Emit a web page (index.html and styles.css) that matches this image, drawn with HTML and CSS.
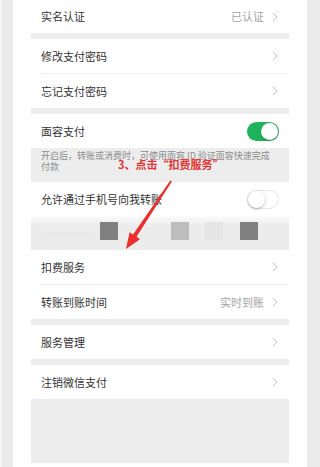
FILE: index.html
```html
<!DOCTYPE html>
<html lang="zh-CN">
<head>
<meta charset="utf-8">
<link rel="stylesheet" href="styles.css">
</head>
<body>
<div class="frame">
  <div class="side side-left"></div>
  <div class="panel">
    <div class="screen">
      <div class="row h33">
        <span class="label">实名认证</span>
        <span class="right"><span class="value">已认证</span><svg class="chev" viewBox="0 0 6 10"><polyline points="1,1 5,5 1,9"/></svg></span>
      </div>
      <div class="sep"></div>
      <div class="row">
        <span class="label">修改支付密码</span>
        <span class="right"><svg class="chev" viewBox="0 0 6 10"><polyline points="1,1 5,5 1,9"/></svg></span>
      </div>
      <div class="divider"></div>
      <div class="row">
        <span class="label">忘记支付密码</span>
        <span class="right"><svg class="chev" viewBox="0 0 6 10"><polyline points="1,1 5,5 1,9"/></svg></span>
      </div>
      <div class="sep"></div>
      <div class="row">
        <span class="label">面容支付</span>
        <span class="toggle on"><span class="knob"></span></span>
      </div>
      <div class="desc">开启后，转账或消费时，可使用面容 ID 验证面容快速完成付款</div>
      <div class="row">
        <span class="label">允许通过手机号向我转账</span>
        <span class="toggle off"><span class="knob"></span></span>
      </div>
      <div class="blur">
        <span class="ghost-text"></span>
        <span class="sq dark sq1"></span>
        <span class="sq light sq2"></span>
        <span class="sq faint sq3"></span>
        <span class="sq dark sq4"></span>
      </div>
      <div class="row">
        <span class="label">扣费服务</span>
        <span class="right"><svg class="chev" viewBox="0 0 6 10"><polyline points="1,1 5,5 1,9"/></svg></span>
      </div>
      <div class="divider"></div>
      <div class="row">
        <span class="label">转账到账时间</span>
        <span class="right"><span class="value">实时到账</span><svg class="chev" viewBox="0 0 6 10"><polyline points="1,1 5,5 1,9"/></svg></span>
      </div>
      <div class="sep"></div>
      <div class="row">
        <span class="label">服务管理</span>
        <span class="right"><svg class="chev" viewBox="0 0 6 10"><polyline points="1,1 5,5 1,9"/></svg></span>
      </div>
      <div class="sep"></div>
      <div class="row">
        <span class="label">注销微信支付</span>
        <span class="right"><svg class="chev" viewBox="0 0 6 10"><polyline points="1,1 5,5 1,9"/></svg></span>
      </div>
      <div class="bottom-fill"></div>
    </div>
  </div>
  <div class="side side-right"></div>

  <div class="note">3、点击“扣费服务”</div>
  <svg class="arrow" viewBox="0 0 320 467" width="320" height="467">
    <polygon points="170.3,180.4 133.1,234.6 129.6,232.2 126,249 140,239.2 136.5,236.8 171.9,181.4"/>
  </svg>
</div>
</body>
</html>
```

FILE: styles.css
```css
* { box-sizing: border-box; }
html, body { margin: 0; padding: 0; }
body {
  font-family: "Noto Sans CJK SC", "Noto Sans", sans-serif;
  background: #ffffff;
}
.frame {
  position: relative;
  width: 320px;
  height: 467px;
  display: flex;
  overflow: hidden;
}
.side {
  width: 13px;
  background: #ebebeb;
}
.side-left { border-left: 2px solid #f5f5f5; }
.side-right { width: 13px; }
.panel {
  width: 294px;
  background: #ffffff;
  padding: 0 18px;
}
.screen {
  display: flex;
  flex-direction: column;
}
.row {
  height: 34px;
  display: flex;
  align-items: center;
  justify-content: space-between;
  padding: 0 10px 0 10px;
  background: #ffffff;
}
.row.h33 { height: 33px; }
.label {
  font-size: 11px;
  color: #333333;
  line-height: 1;
}
.right {
  display: flex;
  align-items: center;
  gap: 8px;
  padding-right: 1px;
}
.value {
  font-size: 11px;
  color: #a3a3a3;
  line-height: 1;
}
.chev {
  width: 6px;
  height: 10px;
  fill: none;
  stroke: #bababa;
  stroke-width: 0.9;
}
.sep {
  height: 6px;
  background: #ededed;
}
.divider {
  height: 1px;
  margin-left: 10px;
  background: #f0f0f0;
}
.toggle {
  width: 32px;
  height: 19px;
  border-radius: 10px;
  display: flex;
  align-items: center;
  padding: 1px;
}
.toggle.on {
  background: #1eb45c;
  justify-content: flex-end;
}
.toggle.off {
  background: #ffffff;
  border: 1px solid #e6e6e6;
  padding: 0;
}
.knob {
  width: 17px;
  height: 17px;
  border-radius: 50%;
  background: #ffffff;
  box-shadow: 0 1px 2px rgba(0,0,0,0.25);
}
.toggle.off .knob { box-shadow: 0 1px 3px rgba(0,0,0,0.3); }
.desc {
  height: 34px;
  background: #ededed;
  color: #8c8c8c;
  font-size: 9px;
  line-height: 11px;
  padding: 2px 16px 0 10px;
}
.blur {
  height: 34px;
  background: linear-gradient(#fbfbfb 0, #f4f4f4 5px, #ececec 9px, #ececec 100%);
  display: flex;
  align-items: flex-start;
  padding-top: 6px;
  position: relative;
}
.ghost-text {
  width: 52px;
  height: 4px;
  margin-top: 10px;
  margin-left: 10px;
  background: #e8e8e8;
  filter: blur(1.5px);
}
.sq {
  width: 18px;
  height: 18px;
  display: block;
}
.sq.dark { background: #808080; }
.sq.light { background: #bdbdbd; }
.sq.faint { background: #e5e5e5; }
.sq1 { margin-left: 7px; }
.sq2 { margin-left: 53px; }
.sq3 { margin-left: 16px; }
.sq4 { margin-left: 17px; }
.bottom-fill {
  height: 64px;
  background: #ededed;
}
.note {
  position: absolute;
  left: 118px;
  top: 157px;
  font-size: 11px;
  line-height: 14px;
  font-weight: bold;
  color: #e8302e;
  white-space: nowrap;
}
.arrow {
  position: absolute;
  left: 0;
  top: 0;
  pointer-events: none;
}
.arrow polygon { fill: #ea2f2c; }
```
